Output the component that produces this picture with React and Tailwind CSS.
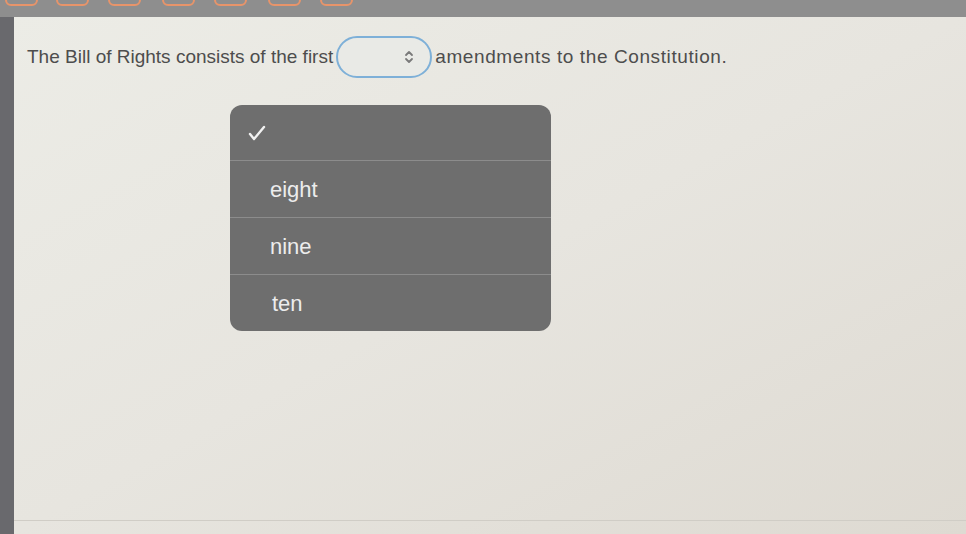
import React from 'react';

const tabs = [5, 56, 108, 162, 214, 268, 320];

const App = () => {
  return (
    <div
      className="relative w-[966px] h-[534px] overflow-hidden bg-[#8e8e8e]"
      style={{ fontFamily: '"Liberation Sans", Arial, sans-serif' }}
    >
      {/* top strip with the orange tab edges */}
      <div className="relative h-[17px]">
        {tabs.map((x) => (
          <div
            key={x}
            className="absolute top-[-20px] w-[33px] h-[26px] rounded-md border-2 border-[#e7946a]"
            style={{ left: x }}
          />
        ))}
      </div>

      <div className="flex h-[517px]">
        <div className="w-[14px] bg-[#69696d] shrink-0" />
        <div className="flex-1 flex flex-col bg-gradient-to-br from-[#ecece6] via-[#e7e5df] to-[#dedad2]">
          <div className="flex items-center h-[80px] pl-[13px] text-[19px] text-[#4d4d4d]">
            <span>The Bill of Rights consists of the first</span>
            <div className="mx-[3px] w-[96px] h-[42px] rounded-full border-2 border-[#7eb0d8] bg-[#e9eae6] flex items-center justify-end pr-[16px]">
              <svg width="10" height="14" viewBox="0 0 10 14" fill="none" stroke="#7a7a7a" strokeWidth="1.8" strokeLinecap="round" strokeLinejoin="round">
                <path d="M2 5l3-3 3 3" />
                <path d="M2 9l3 3 3-3" />
              </svg>
            </div>
            <span className="tracking-[0.6px]">amendments to the Constitution.</span>
          </div>

          <div className="ml-[216px] mt-[8px] w-[321px] rounded-[12px] bg-[#6e6e6e] text-[#ececec] text-[22px]">
            <div className="h-[56px] flex items-center pl-[18px] border-b border-[#8c8c8c]">
              <svg width="18" height="16" viewBox="0 0 18 16" fill="none" stroke="#f2f2f2" strokeWidth="2.4" strokeLinecap="round" strokeLinejoin="round">
                <path d="M2 9l4 5L16 2" />
              </svg>
            </div>
            <div className="h-[57px] flex items-center pl-[40px] border-b border-[#8c8c8c]">eight</div>
            <div className="h-[57px] flex items-center pl-[40px] border-b border-[#8c8c8c]">nine</div>
            <div className="h-[56px] flex items-center pl-[42px]">ten</div>
          </div>

          <div className="flex-1" />
          <div className="h-[14px] border-t border-[#d0cdc6]" />
        </div>
      </div>
    </div>
  );
};

export default App;
